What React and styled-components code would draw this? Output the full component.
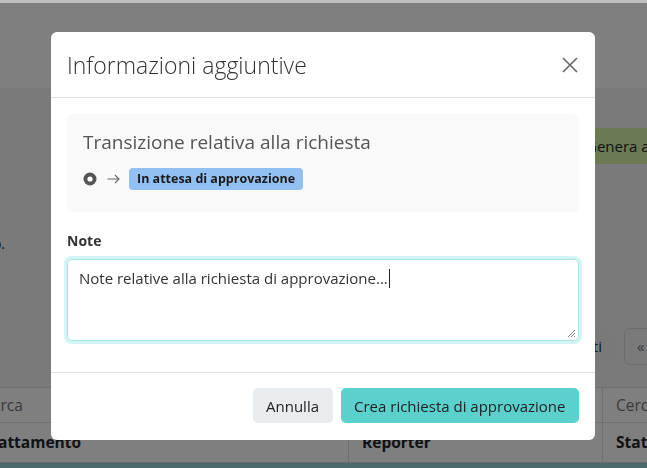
import React from 'react';
import styled, { createGlobalStyle } from 'styled-components';

const GlobalStyle = createGlobalStyle`
    html, body {
        margin: 0;
        padding: 0;
        width: 647px;
        height: 468px;
        overflow: hidden;
        font-family: "Open Sans", "Noto Sans", sans-serif;
        color: #212529;
    }
`;

// page behind the dialog
const Page = styled.div`
    width: 647px;
    height: 468px;
    overflow: hidden;
    background: #f5f5f5;
`;

const TopStrip = styled.div`
    height: 3px;
    background: #bfbfbf;
    position: relative;
    z-index: 20;
`;

const PageHeader = styled.div`
    height: 85px;
    background: #fff;
`;

const Toolbar = styled.div`
    display: flex;
    padding: 40px 0 0 573px;
    white-space: nowrap;
`;

const GreenButton = styled.div`
    height: 36px;
    line-height: 36px;
    padding: 0 13px;
    background: #d6f5a6;
    border-radius: 4px;
    font-size: 15px;
`;

const Paragraph = styled.p`
    width: 260px;
    margin: 70px 0 0 -255px;
    text-align: right;
    white-space: nowrap;
    font-size: 14px;
    line-height: 20px;
`;

const Pager = styled.div`
    display: flex;
    gap: 9px;
    margin: 74px 0 0 557px;
    white-space: nowrap;
`;

const PagerButton = styled.div`
    height: 35px;
    line-height: 35px;
    padding: 0 12px;
    border-radius: 6px;
    font-size: 15px;
    background: ${p => (p.$filled ? '#f2f2f2' : 'transparent')};
    border: 1px solid ${p => (p.$filled ? '#f2f2f2' : '#d8d8d8')};
    color: ${p => (p.$filled ? '#1f3a5a' : '#6c757d')};
`;

const Table = styled.div`
    display: grid;
    grid-template-columns: 380px 254px 200px;
    margin: 22px 0 0 -31px;
    background: #fff;
    border-top: 1px solid #dedede;
`;

const Cell = styled.div`
    height: ${p => (p.$head ? '39px' : '34px')};
    line-height: ${p => (p.$head ? '39px' : '34px')};
    padding: 0 13px;
    font-size: 15.5px;
    font-weight: ${p => (p.$head ? 700 : 400)};
    color: ${p => (p.$head ? '#212529' : '#777')};
    border-right: 1px solid #dedede;
    border-bottom: 1px solid #dedede;
    white-space: nowrap;
    overflow: hidden;
`;

const TealRow = styled.div`
    grid-column: 1 / -1;
    height: 20px;
    background: #8ed3d3;
`;

// dialog
const Backdrop = styled.div`
    position: fixed;
    inset: 3px 0 0 0;
    background: rgba(0, 0, 0, 0.5);
    z-index: 10;
`;

const Dialog = styled.div`
    width: 544px;
    margin: 29px 0 0 51px;
    background: #fff;
    border-radius: 6px;
    overflow: hidden;
`;

const DialogHeader = styled.div`
    display: flex;
    align-items: center;
    justify-content: space-between;
    height: 65px;
    padding: 0 16px;
    border-bottom: 1px solid #dee2e6;
`;

const Title = styled.h5`
    margin: 0;
    font-size: 23px;
    font-weight: 300;
    color: #333;
    line-height: 30px;
`;

const CloseButton = styled.button`
    display: flex;
    padding: 0;
    border: 0;
    background: none;
    margin-right: 1px;
`;

const DialogBody = styled.div`
    padding: 16px;
`;

const Card = styled.div`
    padding: 15px 16px 22px;
    background: #f9f9f9;
    border-radius: 6px;
`;

const CardTitle = styled.div`
    font-size: 19px;
    line-height: 26px;
    color: #555;
`;

const Transition = styled.div`
    display: flex;
    align-items: center;
    margin-top: 13px;
`;

const Arrow = styled.svg`
    margin: 0 9px 0 10px;
`;

const Badge = styled.span`
    display: inline-block;
    padding: 0 8px;
    height: 22px;
    line-height: 22px;
    border-radius: 4px;
    background: #92c0f2;
    font-size: 12.5px;
    font-weight: 700;
    color: #1a1a1a;
`;

const Label = styled.label`
    display: block;
    margin: 18px 0 7px;
    font-size: 14px;
    font-weight: 700;
    line-height: 22px;
    color: #333;
`;

const TextArea = styled.div`
    position: relative;
    box-sizing: border-box;
    height: 82px;
    margin-bottom: 15px;
    padding: 6px 11px;
    border: 1px solid #a6e4e5;
    border-radius: 5px;
    box-shadow: 0 0 0 3px #d4f3f4;
    font-size: 15px;
    line-height: 25px;
    color: #333;
`;

const Caret = styled.span`
    display: inline-block;
    width: 1px;
    height: 19px;
    margin-left: 1px;
    vertical-align: -4px;
    background: #222;
`;

const Grip = styled.svg`
    position: absolute;
    right: 2px;
    bottom: 2px;
`;

const DialogFooter = styled.div`
    display: flex;
    justify-content: flex-end;
    gap: 8px;
    padding: 15px 16px 17px;
    border-top: 1px solid #dee2e6;
`;

const Button = styled.button`
    height: 35px;
    padding: 0 13.5px;
    border: 0;
    border-radius: 5px;
    font-family: inherit;
    font-size: 15px;
    color: #222;
    background: ${p => (p.$primary ? '#5ad1cd' : '#e9ecef')};
`;

const DotCircle = () => (
    <svg width="14" height="14" viewBox="0 0 14 14">
        <circle cx="7" cy="7" r="6.5" fill="#555" />
        <circle cx="7" cy="7" r="2.6" fill="#fff" />
    </svg>
);

const CloseIcon = () => (
    <svg width="16" height="16" viewBox="0 0 16 16">
        <path d="M1 1 L15 15 M15 1 L1 15" stroke="#666" strokeWidth="1.6" fill="none" />
    </svg>
);

export default function App() {
    return (
        <>
            <GlobalStyle />
            <Page>
                <TopStrip />
                <PageHeader />
                <Toolbar>
                    <GreenButton>Genera approvazione</GreenButton>
                </Toolbar>
                <Paragraph>Nessuna richiesta in corso.</Paragraph>
                <Pager>
                    <PagerButton $filled>Tutti</PagerButton>
                    <PagerButton>«</PagerButton>
                </Pager>
                <Table>
                    <Cell>Cerca</Cell>
                    <Cell>Cerca</Cell>
                    <Cell>Cerca</Cell>
                    <Cell $head>Trattamento</Cell>
                    <Cell $head>Reporter</Cell>
                    <Cell $head>Stato</Cell>
                    <TealRow />
                </Table>
            </Page>

            <Backdrop>
                <Dialog>
                    <DialogHeader>
                        <Title>Informazioni aggiuntive</Title>
                        <CloseButton aria-label="Chiudi"><CloseIcon /></CloseButton>
                    </DialogHeader>
                    <DialogBody>
                        <Card>
                            <CardTitle>Transizione relativa alla richiesta</CardTitle>
                            <Transition>
                                <DotCircle />
                                <Arrow width="13" height="10" viewBox="0 0 13 10">
                                    <path d="M0.5 5 H12 M8 1 L12 5 L8 9" stroke="#666" strokeWidth="1.1" fill="none" />
                                </Arrow>
                                <Badge>In attesa di approvazione</Badge>
                            </Transition>
                        </Card>
                        <Label>Note</Label>
                        <TextArea>
                            Note relative alla richiesta di approvazione...<Caret />
                            <Grip width="10" height="10" viewBox="0 0 10 10">
                                <path d="M9 2 L2 9 M9 5 L5 9 M9 8 L8 9" stroke="#888" strokeWidth="1" />
                            </Grip>
                        </TextArea>
                    </DialogBody>
                    <DialogFooter>
                        <Button>Annulla</Button>
                        <Button $primary>Crea richiesta di approvazione</Button>
                    </DialogFooter>
                </Dialog>
            </Backdrop>
        </>
    );
}
